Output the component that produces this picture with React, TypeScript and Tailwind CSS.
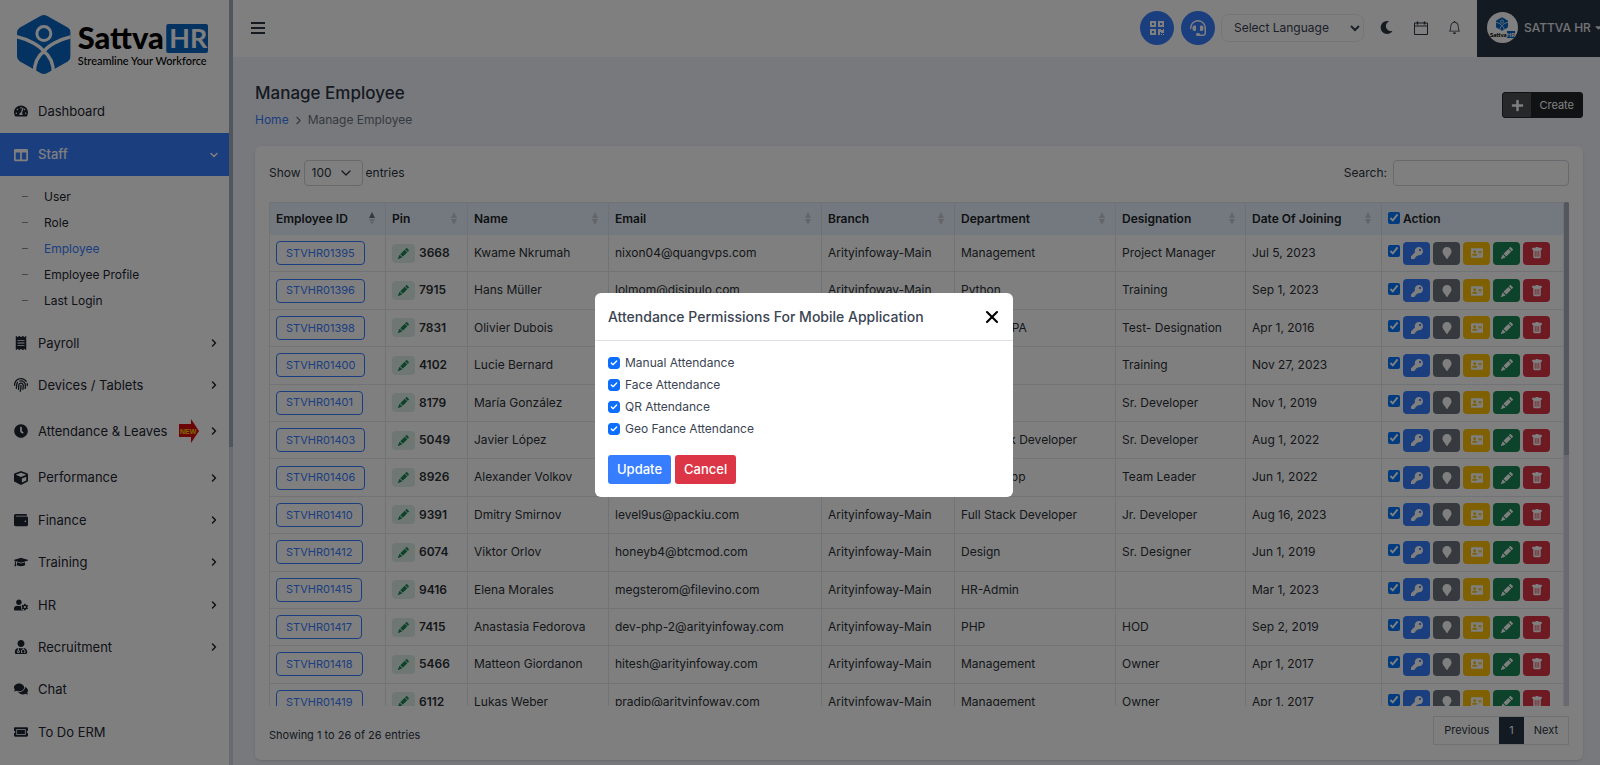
import { useState } from "react";
import type { ReactNode } from "react";
import clsx from "clsx";
import {
  FaAddressCard,
  FaCaretDown,
  FaClock,
  FaColumns,
  FaComments,
  FaCube,
  FaFingerprint,
  FaGraduationCap,
  FaHeadset,
  FaKey,
  FaMapMarker,
  FaMoon,
  FaPlus,
  FaQrcode,
  FaReceipt,
  FaTachometerAlt,
  FaTicketAlt,
  FaUserCog,
  FaUserMd,
  FaWallet,
} from "react-icons/fa";
import { BsBell, BsPencilFill, BsTrashFill } from "react-icons/bs";
import { Check, ChevronDown, ChevronRight, X } from "lucide-react";

type Employee = {
  id: string;
  pin: string;
  name: string;
  email: string;
  department: string;
  designation: string;
  joined: string;
};

const employees: Employee[] = [
  { id: "STVHR01395", pin: "3668", name: "Kwame Nkrumah", email: "nixon04@quangvps.com", department: "Management", designation: "Project Manager", joined: "Jul 5, 2023" },
  { id: "STVHR01396", pin: "7915", name: "Hans Müller", email: "lolmom@disipulo.com", department: "Python", designation: "Training", joined: "Sep 1, 2023" },
  { id: "STVHR01398", pin: "7831", name: "Olivier Dubois", email: "", department: "Admin + PA", designation: "Test- Designation", joined: "Apr 1, 2016" },
  { id: "STVHR01400", pin: "4102", name: "Lucie Bernard", email: "", department: "", designation: "Training", joined: "Nov 27, 2023" },
  { id: "STVHR01401", pin: "8179", name: "María González", email: "", department: "", designation: "Sr. Developer", joined: "Nov 1, 2019" },
  { id: "STVHR01403", pin: "5049", name: "Javier López", email: "", department: "Full Stack Developer", designation: "Sr. Developer", joined: "Aug 1, 2022" },
  { id: "STVHR01406", pin: "8926", name: "Alexander Volkov", email: "", department: "Mobile App", designation: "Team Leader", joined: "Jun 1, 2022" },
  { id: "STVHR01410", pin: "9391", name: "Dmitry Smirnov", email: "level9us@packiu.com", department: "Full Stack Developer", designation: "Jr. Developer", joined: "Aug 16, 2023" },
  { id: "STVHR01412", pin: "6074", name: "Viktor Orlov", email: "honeyb4@btcmod.com", department: "Design", designation: "Sr. Designer", joined: "Jun 1, 2019" },
  { id: "STVHR01415", pin: "9416", name: "Elena Morales", email: "megsterom@filevino.com", department: "HR-Admin", designation: "", joined: "Mar 1, 2023" },
  { id: "STVHR01417", pin: "7415", name: "Anastasia Fedorova", email: "dev-php-2@arityinfoway.com", department: "PHP", designation: "HOD", joined: "Sep 2, 2019" },
  { id: "STVHR01418", pin: "5466", name: "Matteon Giordanon", email: "hitesh@arityinfoway.com", department: "Management", designation: "Owner", joined: "Apr 1, 2017" },
  { id: "STVHR01419", pin: "6112", name: "Lukas Weber", email: "pradip@arityinfoway.com", department: "Management", designation: "Owner", joined: "Apr 1, 2017" },
];

const columns = [
  { label: "Employee ID", width: "w-[116px]" },
  { label: "Pin", width: "w-[82px]" },
  { label: "Name", width: "w-[141px]" },
  { label: "Email", width: "w-[213px]" },
  { label: "Branch", width: "w-[133px]" },
  { label: "Department", width: "w-[161px]" },
  { label: "Designation", width: "w-[130px]" },
  { label: "Date Of Joining", width: "w-[136px]" },
];

const permissions = [
  "Manual Attendance",
  "Face Attendance",
  "QR Attendance",
  "Geo Fance Attendance",
];

function LogoMark({ className }: { className?: string }) {
  return (
    <svg viewBox="0 0 54 60" className={className} aria-hidden="true">
      <path
        d="M24 1Q27-.5 30 1L51 13Q54 15 54 18V42Q54 45 51 47L30 59Q27 60.500 24 59L3 47Q0 45 0 42V18Q0 15 3 13Z"
        fill="#0b66c3"
      />
      <circle cx="27" cy="19" r="7" fill="none" stroke="#fff" strokeWidth="3" />
      <path
        d="M-1 22C12 25 23 31 27 37C31 31 42 25 55 22M27 37C19 43 17 51 17.500 61M27 37C35 43 37 51 36.500 61"
        fill="none"
        stroke="#fff"
        strokeWidth="3.400"
      />
    </svg>
  );
}

function Logo() {
  return (
    <svg
      viewBox="0 0 196 62"
      className="h-[62px] w-[196px]"
      role="img"
      aria-label="Sattva HR"
    >
      <svg x="0" y="0" width="54" height="61">
        <LogoMark />
      </svg>
      <rect x="150" y="10" width="42" height="29" rx="2" fill="#0b66c3" />
      <g fontFamily="Lato, sans-serif">
        <text x="61" y="35" fontSize="31" fontWeight="900" fill="#000">
          Sattva
        </text>
        <text x="153" y="34" fontSize="27" fontWeight="700" fill="#fff">
          HR
        </text>
        <text x="61" y="51" fontSize="11" fontWeight="500" fill="#000">
          Streamline Your Workforce
        </text>
      </g>
    </svg>
  );
}

function NewBadge() {
  return (
    <svg viewBox="0 0 20 24" className="ml-3 h-6 w-5" role="img" aria-label="New">
      <path d="M0 5H12V0L20 12L12 24V18H0Z" fill="#d90d0d" />
      <text
        x="1"
        y="15"
        fontFamily="Liberation Sans, sans-serif"
        fontSize="7"
        fontWeight="700"
        fill="#ffd400"
      >
        NEW
      </text>
    </svg>
  );
}

function CalendarIcon() {
  return (
    <svg viewBox="0 0 14 14" className="size-3.5" fill="none" stroke="currentColor">
      <path d="M.5 2H13.500V13.500H.5ZM.5 5H13.500" />
      <path d="M3.500 .5V3.500M10.500 .5V3.500" strokeWidth="1.500" />
    </svg>
  );
}

function MenuItem(props: {
  icon: ReactNode;
  label: string;
  active?: boolean;
  arrow?: boolean;
  badge?: ReactNode;
}) {
  const Arrow = props.active ? ChevronDown : ChevronRight;
  return (
    <a
      href="#"
      className={clsx(
        "flex items-center pr-[9px] pl-3.5 text-[13px] leading-[1.72]",
        props.badge ? "py-[13px]" : "py-2.5",
        props.active
          ? "mt-px bg-[#377dff] font-medium text-white"
          : "text-[#1e2530]",
      )}
    >
      <span className="w-6 shrink-0 [&>svg]:h-3.5 [&>svg]:w-auto">
        {props.icon}
      </span>
      {props.label}
      {props.badge}
      {props.arrow && <Arrow size={12} strokeWidth={3} className="ml-auto" />}
    </a>
  );
}

function Sidebar() {
  const links = ["User", "Role", "Employee", "Employee Profile", "Last Login"];
  return (
    <aside className="flex w-[233px] shrink-0 overflow-hidden bg-white">
      <div className="min-w-0 flex-1">
        <div className="flex h-[90px] px-[17px] pt-3.5">
          <Logo />
        </div>
        <nav>
          <MenuItem icon={<FaTachometerAlt />} label="Dashboard" />
          <MenuItem icon={<FaColumns />} label="Staff" active arrow />
          <ul className="pt-2 pb-2">
            {links.map((link) => (
              <li key={link}>
                <a
                  href="#"
                  className={clsx(
                    "flex h-[26px] items-center pl-[22px] text-[12px]",
                    link === "Employee" ? "text-[#377dff]" : "text-[#1e2530]",
                  )}
                >
                  <span className="mr-4 h-px w-[6px] bg-[#8a8f98]" />
                  {link}
                </a>
              </li>
            ))}
          </ul>
          <MenuItem icon={<FaReceipt />} label="Payroll" arrow />
          <MenuItem icon={<FaFingerprint />} label="Devices / Tablets" arrow />
          <MenuItem
            icon={<FaClock />}
            label="Attendance & Leaves"
            badge={<NewBadge />}
            arrow
          />
          <MenuItem icon={<FaCube />} label="Performance" arrow />
          <MenuItem icon={<FaWallet />} label="Finance" arrow />
          <MenuItem icon={<FaGraduationCap />} label="Training" arrow />
          <MenuItem icon={<FaUserCog />} label="HR" arrow />
          <MenuItem icon={<FaUserMd />} label="Recruitment" arrow />
          <MenuItem icon={<FaComments />} label="Chat" />
          <MenuItem icon={<FaTicketAlt />} label="To Do ERM" />
        </nav>
      </div>
      <div className="w-1 bg-[#d5d7e3]">
        <div className="h-[447px] bg-[#a3acbd]" />
      </div>
    </aside>
  );
}

function Topbar() {
  return (
    <header className="flex h-[57px] shrink-0 items-center bg-white pl-[18px] text-[#2b3442]">
      <button type="button" aria-label="Toggle menu" className="grid gap-[3px] pb-0.5">
        <span className="h-0.5 w-3.5 bg-[#2b3442]" />
        <span className="h-0.5 w-3.5 bg-[#2b3442]" />
        <span className="h-0.5 w-3.5 bg-[#2b3442]" />
      </button>
      <div className="ml-auto flex items-center pb-0.5">
        <button
          type="button"
          aria-label="QR code"
          className="mr-[7px] grid size-[34px] place-items-center rounded-full bg-[#377dff] text-white"
        >
          <FaQrcode size={16} />
        </button>
        <button
          type="button"
          aria-label="Support"
          className="mr-1.5 grid size-[34px] place-items-center rounded-full bg-[#377dff] text-white"
        >
          <FaHeadset size={16} />
        </button>
        <select
          aria-label="Language"
          className="h-7 w-[143px] rounded-lg border border-[#e9ebef] bg-white pl-2 text-[12px] text-[#374151]"
        >
          <option>Select Language</option>
          <option>English</option>
        </select>
        <button type="button" aria-label="Dark mode" className="ml-4">
          <FaMoon size={13} />
        </button>
        <button type="button" aria-label="Calendar" className="ml-[21px]">
          <CalendarIcon />
        </button>
        <button type="button" aria-label="Notifications" className="ml-5">
          <BsBell size={13} />
        </button>
      </div>
      <button
        type="button"
        className="ml-4 flex h-full w-[123px] items-center gap-1.5 overflow-hidden bg-[#293443] pb-0.5 pl-2.5 text-[12px] font-medium whitespace-nowrap text-[#e4e7eb]"
      >
        <span className="grid size-[31px] shrink-0 place-content-center justify-items-center rounded-full bg-white">
          <LogoMark className="h-3.5 w-3" />
          <span className="font-[Lato] text-[6px] leading-2 font-black text-black">
            Sattva<span className="bg-[#0b66c3] text-white">HR</span>
          </span>
        </span>
        <span className="flex items-center gap-0.5">
          SATTVA HR
          <FaCaretDown size={11} className="shrink-0" />
        </span>
      </button>
    </header>
  );
}

function SortArrows({ ascending }: { ascending?: boolean }) {
  return (
    <svg viewBox="0 0 6 13" className="h-[13px] w-[6px]" aria-hidden="true">
      <path d="M3 0L6 6H0Z" fill={ascending ? "#6b7280" : "#c6cad1"} />
      <path d="M3 13L6 7H0Z" fill="#c6cad1" />
    </svg>
  );
}

function ActionButton(props: { label: string; color: string; icon: ReactNode }) {
  return (
    <button
      type="button"
      aria-label={props.label}
      className={clsx(
        "grid h-[23px] w-[27px] place-items-center rounded text-[12px] text-white",
        props.color,
      )}
    >
      {props.icon}
    </button>
  );
}

function EmployeeRow({ employee }: { employee: Employee }) {
  const cell = "border-r border-b border-[#e3e6ea] px-1.5 py-2";
  return (
    <tr>
      <td className={cell}>
        <div className="-my-0.5 flex">
          <a
            href="#"
            className="flex h-6 items-center rounded border border-[#377dff] px-[9px] text-[11px] text-[#377dff]"
          >
            {employee.id}
          </a>
        </div>
      </td>
      <td className={cell}>
        <div className="flex items-center gap-1">
          <button
            type="button"
            aria-label="Edit pin"
            className="grid h-[19px] w-[23px] place-items-center rounded bg-[#dfeee8] text-[#198754]"
          >
            <BsPencilFill size={11} />
          </button>
          <b className="font-semibold">{employee.pin}</b>
        </div>
      </td>
      <td className={cell}>{employee.name}</td>
      <td className={cell}>{employee.email}</td>
      <td className={cell}>Arityinfoway-Main</td>
      <td className={cell}>{employee.department}</td>
      <td className={cell}>{employee.designation}</td>
      <td className={cell}>{employee.joined}</td>
      <td className={cell}>
        <div className="-my-0.5 flex items-center gap-[3px]">
          <input
            type="checkbox"
            defaultChecked
            aria-label={`Select ${employee.name}`}
            className="mb-1 size-3"
          />
          <ActionButton label="Permissions" color="bg-[#377dff]" icon={<FaKey />} />
          <ActionButton label="Location" color="bg-[#6c757d]" icon={<FaMapMarker />} />
          <ActionButton label="Profile card" color="bg-[#ffc107]" icon={<FaAddressCard />} />
          <ActionButton label="Edit" color="bg-[#198754]" icon={<BsPencilFill />} />
          <ActionButton label="Delete" color="bg-[#dc3545]" icon={<BsTrashFill />} />
        </div>
      </td>
    </tr>
  );
}

function EmployeeTable() {
  return (
    <div className="mt-4 flex max-h-[504px]">
      <div className="flex-1 overflow-y-auto [scrollbar-width:none]">
        <table className="w-full table-fixed border-separate border-spacing-0 border-l border-[#e3e6ea] text-left text-[12px] leading-[1.7] whitespace-nowrap text-[#2b3035]">
          <thead>
            <tr className="h-[33px] bg-[#e7f2fc] text-[#212529]">
              {columns.map((column, i) => (
                <th
                  key={column.label}
                  className={clsx(
                    "border-t border-r border-[#dfe3e8] pr-2.5 pl-1.5 font-semibold",
                    column.width,
                  )}
                >
                  <div className="flex items-center justify-between">
                    {column.label}
                    <SortArrows ascending={i === 0} />
                  </div>
                </th>
              ))}
              <th className="border-t border-r border-[#dfe3e8] px-1.5 font-semibold">
                <label className="flex items-center gap-[3px]">
                  <input type="checkbox" defaultChecked className="mb-0.5 size-3" />
                  Action
                </label>
              </th>
            </tr>
          </thead>
          <tbody>
            {employees.map((employee) => (
              <EmployeeRow key={employee.id} employee={employee} />
            ))}
          </tbody>
        </table>
      </div>
      <div className="w-[5px] bg-[#d0d3e2]">
        <div className="h-[253px] rounded-t bg-[#a9aebd]" />
      </div>
    </div>
  );
}

function PermissionsModal({ onClose }: { onClose: () => void }) {
  return (
    <div className="fixed inset-0 z-10 flex items-start justify-center bg-black/50 pt-[293px]">
      <div
        role="dialog"
        aria-labelledby="modal-title"
        className="ml-2 w-[418px] rounded-md bg-white text-[#3b4453]"
      >
        <div className="flex h-12 items-center justify-between border-b border-[#dee2e6] pr-[11px] pl-[13px]">
          <h2 id="modal-title" className="text-[14px] font-medium">
            Attendance Permissions For Mobile Application
          </h2>
          <button type="button" aria-label="Close" onClick={onClose}>
            <X size={20} strokeWidth={2.5} className="text-black" />
          </button>
        </div>
        <form className="px-[13px] pt-[11px] pb-[13px]" onSubmit={(e) => e.preventDefault()}>
          {permissions.map((permission) => (
            <label key={permission} className="flex h-[22px] items-center text-[12px]">
              <span className="relative mr-[5px] size-3">
                <input
                  type="checkbox"
                  defaultChecked
                  className="peer block size-3 appearance-none rounded-[3px] border border-[#0d6efd] checked:bg-[#0d6efd]"
                />
                <Check
                  size={8}
                  strokeWidth={4}
                  className="pointer-events-none absolute top-0.5 left-0.5 hidden text-white peer-checked:block"
                />
              </span>
              {permission}
            </label>
          ))}
          <div className="mt-[15px] flex gap-1 text-[13px] font-medium text-white">
            <button type="submit" className="h-[29px] rounded-[3px] bg-[#377dff] px-[9px]">
              Update
            </button>
            <button
              type="button"
              onClick={onClose}
              className="h-[29px] rounded-[3px] bg-[#dc3545] px-[9px]"
            >
              Cancel
            </button>
          </div>
        </form>
      </div>
    </div>
  );
}

export default function App() {
  const [open, setOpen] = useState(true);
  return (
    <div className="flex h-screen overflow-hidden bg-[#f0f2fa] font-[Inter,sans-serif] text-[#2b3442]">
      <Sidebar />
      <div className="flex min-w-0 flex-1 flex-col">
        <Topbar />
        <main className="pr-[17px] pl-[22px]">
          <div className="flex items-center justify-between pt-[23px]">
            <div>
              <h1 className="text-[17px] leading-[26px] font-medium">Manage Employee</h1>
              <nav className="mt-1 flex h-5 items-center gap-[3px] text-[12px] text-[#6b7280]">
                <a href="#" className="text-[#377dff]">
                  Home
                </a>
                <ChevronRight size={13} />
                <span>Manage Employee</span>
              </nav>
            </div>
            <button
              type="button"
              className="flex h-[26px] items-center overflow-hidden rounded-[3px] border border-[#212529] bg-[#212529] text-[11px] text-white"
            >
              <span className="grid h-full w-7 place-items-center bg-[#4d5154]">
                <FaPlus size={13} />
              </span>
              <span className="px-2">Create</span>
            </button>
          </div>

          <section className="mt-4 rounded-md bg-white px-3.5 pt-3.5 pb-[15px] shadow-sm">
            <div className="flex items-center justify-between text-[12px]">
              <label className="flex items-center gap-[3px]">
                Show
                <span className="relative">
                  <select className="block h-[26px] w-[59px] appearance-none rounded border border-[#ced4da] bg-white pl-[7px]">
                    <option>100</option>
                    <option>50</option>
                  </select>
                  <ChevronDown
                    size={16}
                    className="pointer-events-none absolute top-[5px] right-[9px]"
                  />
                </span>
                entries
              </label>
              <label className="flex items-center gap-1.5">
                Search:
                <input
                  type="search"
                  className="h-[26px] w-44 rounded border border-[#ced4da] bg-white px-2"
                />
              </label>
            </div>

            <EmployeeTable />

            <div className="mt-2.5 flex items-center justify-between">
              <p className="pt-2.5 text-[11px]">Showing 1 to 26 of 26 entries</p>
              <div className="flex h-[29px] border border-[#dee2e6] text-[11px]">
                <button type="button" className="px-2.5">
                  Previous
                </button>
                <button type="button" className="bg-[#293443] px-2.5 text-white">
                  1
                </button>
                <button type="button" className="px-2.5">
                  Next
                </button>
              </div>
            </div>
          </section>
        </main>
      </div>
      {open && <PermissionsModal onClose={() => setOpen(false)} />}
    </div>
  );
}
